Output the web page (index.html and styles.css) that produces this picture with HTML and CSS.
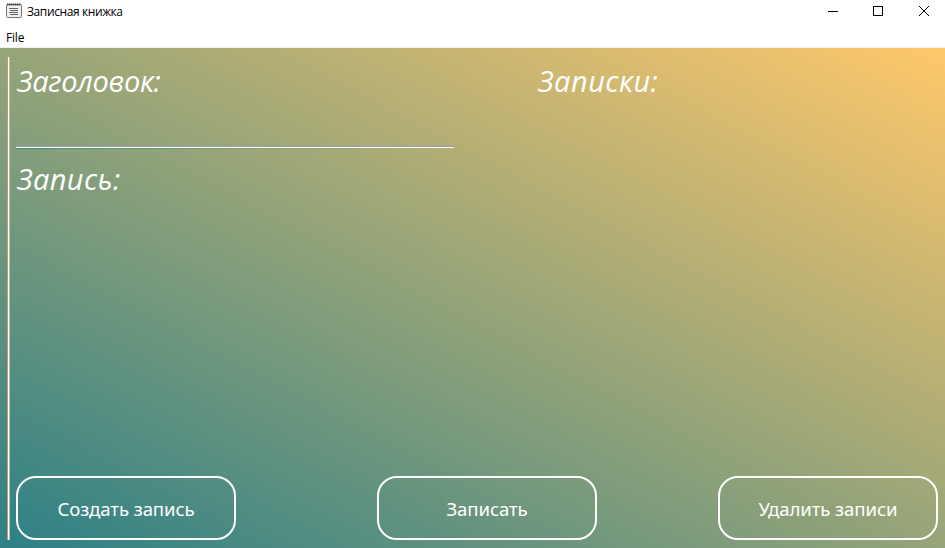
FILE: index.html
```html
<!DOCTYPE html>
<html lang="ru">
<head>
<meta charset="utf-8">
<title>Записная книжка</title>
<link rel="stylesheet" href="styles.css">
</head>
<body>
<header class="titlebar">
  <svg class="app-icon" width="16" height="16" viewBox="0 0 16 16">
    <rect x=".5" y="1.5" width="15" height="13" rx="1" fill="#f1f1f1" stroke="#737176"/>
    <path d="M1 1.5h14" stroke="#444247" stroke-width="2" stroke-dasharray="1.4 .6"/>
    <path d="M3 5.5h9M4 7.5h8M3 9.5h9M4 11.5h8" stroke="#66646a"/>
  </svg>
  <span class="title">Записная книжка</span>
  <nav class="controls">
    <svg width="46" height="23" viewBox="0 0 46 23"><path d="M19 11.5h10" stroke="#000"/></svg>
    <svg width="46" height="23" viewBox="0 0 46 23"><rect x="18.5" y="6.5" width="9" height="9" fill="none" stroke="#000"/></svg>
    <svg width="46" height="23" viewBox="0 0 46 23"><path d="M18 6l10 10M28 6L18 16" stroke="#000"/></svg>
  </nav>
</header>
<div class="menubar"><span class="menu-item">File</span></div>
<main class="content">
  <div class="divider"></div>
  <div class="workspace">
    <div class="columns">
      <section class="editor">
        <h2 class="label heading">Заголовок:</h2>
        <div class="title-input"></div>
        <h2 class="label entry">Запись:</h2>
      </section>
      <section class="notes">
        <h2 class="label list">Записки:</h2>
      </section>
    </div>
    <footer class="actions">
      <button class="action create">Создать запись</button>
      <button class="action save">Записать</button>
      <button class="action delete">Удалить записи</button>
    </footer>
  </div>
</main>
</body>
</html>
```
FILE: styles.css
```css
* { box-sizing: border-box; }
body {
  margin: 0;
  height: 548px;
  display: flex;
  flex-direction: column;
  overflow: hidden;
  background: #fff;
  color: #000;
  font-family: "Open Sans", "Noto Sans", sans-serif;
}
.titlebar {
  display: flex;
  height: 26px;
  padding-left: 6px;
}
.app-icon { margin-top: 3px; }
.title {
  margin-left: 5px;
  font-size: 12px;
  line-height: 24px;
  letter-spacing: -0.4px;
  white-space: nowrap;
}
.controls { display: flex; margin-left: auto; margin-right: -2px; }
.menubar {
  height: 22px;
  padding-left: 6px;
  border-bottom: 1px solid #f0f0f0;
  font-size: 12px;
  line-height: 23px;
}
.menu-item { letter-spacing: -0.2px; }
.content {
  flex: 1;
  display: flex;
  padding: 9px 7px 8px;
  background: linear-gradient(to top right, #2d8086, #ffc86b);
}
.divider {
  width: 3px;
  border-left: 1px solid #a5a09f;
  border-right: 1px solid #d6bd7c;
  background: #fff;
}
.workspace {
  flex: 1;
  display: flex;
  flex-direction: column;
  margin-left: 6px;
}
.columns { flex: 1; display: grid; grid-template-columns: 521px 1fr; }
.label {
  margin: 0;
  height: 48px;
  padding-left: 1px;
  color: #fff;
  font-size: 29px;
  font-style: italic;
  font-weight: 400;
  line-height: 47px;
  white-space: nowrap;
}
.heading { letter-spacing: -0.3px; }
.entry { letter-spacing: 0.4px; }
.list { letter-spacing: 0.5px; }
.title-input {
  width: 438px;
  height: 44px;
  margin-bottom: 6px;
  background:
    linear-gradient(to right, #3f8a86, #b2ae74) bottom / 100% 1px no-repeat,
    linear-gradient(#999ba5 1px, #fff 1px) bottom / 100% 3px no-repeat;
}
.actions {
  display: grid;
  grid-template-columns: 361px 341px 220px;
}
.action {
  width: 220px;
  height: 64px;
  padding: 0;
  border: 2px solid #fff;
  border-radius: 20px;
  background: transparent;
  color: #fff;
  font-family: "Noto Sans", sans-serif;
  font-size: 18.6px;
  letter-spacing: -0.1px;
  white-space: nowrap;
}
```
